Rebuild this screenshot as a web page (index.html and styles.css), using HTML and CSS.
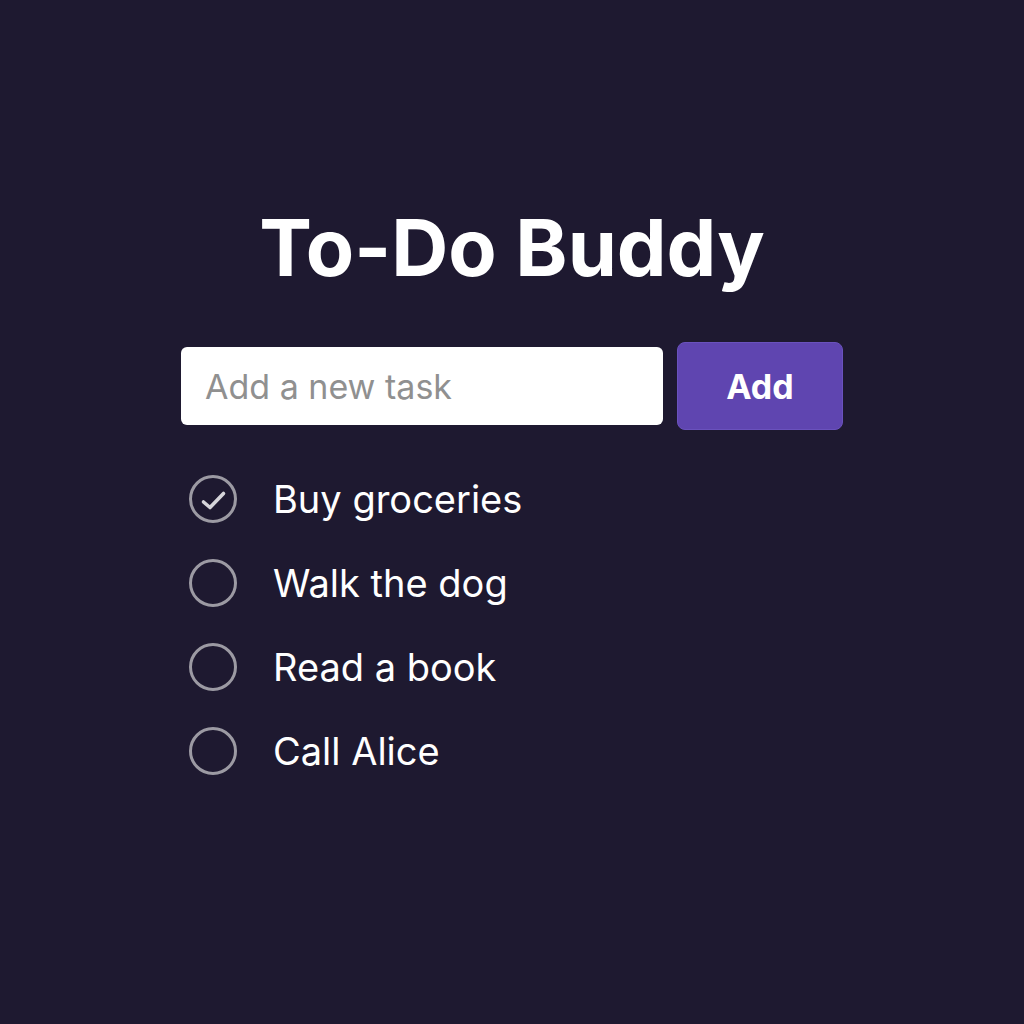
FILE: index.html
```html
<!DOCTYPE html>
<html>
<head>
<meta charset="utf-8">
<link rel="stylesheet" href="styles.css">
</head>
<body>
<main class="app">
  <h1 class="title">To-Do Buddy</h1>
  <form class="add-row">
    <input class="task-input" type="text" placeholder="Add a new task">
    <button class="add-btn" type="button">Add</button>
  </form>
  <ul class="tasks">
    <li class="task">
      <span class="check done">
        <svg viewBox="0 0 28 28" width="28" height="28"><path d="M4.5 17l6.5 5.5L24.5 8.5" fill="none" stroke="#d6d5da" stroke-width="3.6" stroke-linecap="round" stroke-linejoin="round"/></svg>
      </span>
      <span class="label">Buy groceries</span>
    </li>
    <li class="task"><span class="check"></span><span class="label">Walk the dog</span></li>
    <li class="task"><span class="check"></span><span class="label">Read a book</span></li>
    <li class="task"><span class="check"></span><span class="label">Call Alice</span></li>
  </ul>
</main>
</body>
</html>
```
FILE: styles.css
```css
html, body {
  margin: 0;
  padding: 0;
  background: #1e1930;
  font-family: Inter, "Noto Sans", sans-serif;
  color: #ffffff;
}
.app {
  width: 662px;
  margin: 0 auto;
  padding-top: 199px;
  display: flex;
  flex-direction: column;
}
.title {
  margin: 0;
  text-align: center;
  font-size: 79px;
  font-weight: 700;
  line-height: 96px;
  letter-spacing: 0;
}
.add-row {
  display: flex;
  align-items: center;
  gap: 14px;
  margin-top: 47px;
}
.task-input {
  box-sizing: border-box;
  width: 482px;
  height: 78px;
  border: none;
  border-radius: 6px;
  background: #ffffff;
  padding: 0 24px;
  font-family: Inter, sans-serif;
  font-size: 34px;
  color: #333;
  outline: none;
}
.task-input::placeholder {
  color: #909090;
}
.add-btn {
  box-sizing: border-box;
  width: 166px;
  height: 88px;
  border: 1px solid #6a52bd;
  border-radius: 8px;
  background: #5f45b0;
  color: #ffffff;
  font-family: Inter, sans-serif;
  font-size: 34px;
  font-weight: 700;
}
.tasks {
  list-style: none;
  margin: 45px 0 0 8px;
  padding: 0;
  display: flex;
  flex-direction: column;
  gap: 36px;
}
.task {
  display: flex;
  align-items: center;
  gap: 36px;
  height: 48px;
}
.check {
  box-sizing: border-box;
  width: 48px;
  height: 48px;
  border: 3px solid #9c9aa3;
  border-radius: 50%;
  display: flex;
  align-items: center;
  justify-content: center;
  flex: none;
}
.label {
  font-size: 38px;
  font-weight: 400;
}
```
